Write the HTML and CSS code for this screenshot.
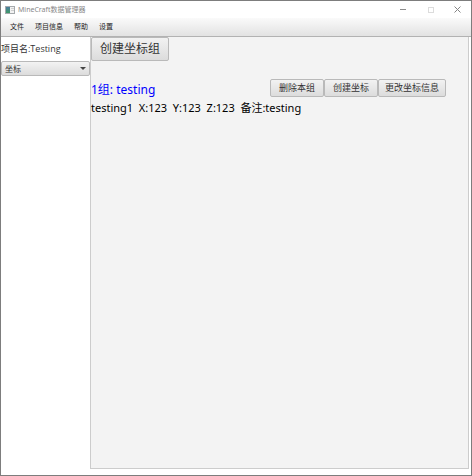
FILE: index.html
```html
<!DOCTYPE html>
<html lang="zh-CN">
<head>
<meta charset="utf-8">
<title>MineCraft数据管理器</title>
<link rel="stylesheet" href="styles.css">
</head>
<body>
<div class="window">
  <header class="titlebar">
    <svg class="app-icon" width="10" height="8" viewBox="0 0 10 8" aria-hidden="true">
      <defs><linearGradient id="g" x1="0" y1="0" x2="0" y2="1"><stop offset="0" stop-color="#4a7c9c"/><stop offset="1" stop-color="#3f9a68"/></linearGradient></defs>
      <rect x=".5" y=".5" width="9" height="7" fill="#f2f2f2" stroke="#a5a9ac"/>
      <rect x="1" y="1" width="4" height="6" fill="url(#g)"/>
      <path d="M6 2.5h3M6 4.5h3" stroke="#cfcfcf"/>
    </svg>
    <h1 class="title">MineCraft数据管理器</h1>
    <div class="controls">
      <button class="control" aria-label="最小化"><svg width="7" height="7" viewBox="0 0 7 7"><path d="M0 3.5h6" stroke="#8c8c8c"/></svg></button>
      <button class="control" aria-label="最大化" disabled><svg width="7" height="7" viewBox="0 0 7 7"><rect x="1.5" y="1.5" width="5" height="5" fill="none" stroke="#dcdcdc"/></svg></button>
      <button class="control" aria-label="关闭"><svg width="7" height="7" viewBox="0 0 7 7"><path d="M.5.5l6 6M6.500.5l-6 6" stroke="#858585"/></svg></button>
    </div>
  </header>
  <nav class="menubar">
    <button class="menu">文件</button>
    <button class="menu">项目信息</button>
    <button class="menu">帮助</button>
    <button class="menu">设置</button>
  </nav>
  <div class="body">
    <aside class="sidebar">
      <p class="project">项目名:Testing</p>
      <div class="combo">
        <select class="select" aria-label="类型"><option>坐标</option></select>
      </div>
    </aside>
    <main class="content">
      <button class="button button-large">创建坐标组</button>
      <section class="group">
        <div class="group-head">
          <h2 class="group-title">1组: testing</h2>
          <div class="actions">
            <button class="button">删除本组</button>
            <button class="button">创建坐标</button>
            <button class="button button-tight">更改坐标信息</button>
          </div>
        </div>
        <p class="point">testing1  X:123  Y:123  Z:123  备注:testing</p>
      </section>
    </main>
  </div>
</div>
</body>
</html>
```
FILE: styles.css
```css
* {
  box-sizing: border-box;
}

body {
  margin: 0;
  font-family: "Noto Sans", "Noto Sans CJK SC", sans-serif;
  color: #000;
  background: #fff;
}

h1, h2, p {
  margin: 0;
  font-weight: 400;
}

button, select {
  font-family: inherit;
  margin: 0;
}

.window {
  display: flex;
  flex-direction: column;
  min-height: 100vh;
  border: 1px solid #7d7d7d;
}

.titlebar {
  display: flex;
  align-items: center;
  height: 17px;
  padding-left: 4px;
}

.app-icon {
  flex: none;
}

.title {
  margin-left: 3px;
  font-size: 7px;
  line-height: 16px;
  color: #888;
  white-space: nowrap;
}

.controls {
  display: flex;
  margin-left: auto;
}

.control {
  display: flex;
  align-items: center;
  justify-content: center;
  width: 27px;
  height: 16px;
  padding: 0;
  border: 0;
  background: none;
}

.menubar {
  display: flex;
  align-items: center;
  gap: 1px;
  height: 19px;
  padding-left: 4px;
  background: linear-gradient(#fafafa, #e2e2e2);
  border-bottom: 1px solid #b2b2b2;
}

.menu {
  padding: 0 5px;
  border: 0;
  background: none;
  font-size: 7px;
  line-height: 16px;
  color: #222;
  white-space: nowrap;
}

.body {
  display: flex;
  flex: 1;
  padding: 0 2px 6px 0;
}

.sidebar {
  flex: none;
  width: 89px;
}

.project {
  font-family: "Open Sans", "Noto Sans CJK SC", sans-serif;
  font-size: 9px;
  line-height: 24px;
  color: #333;
  white-space: nowrap;
}

.combo {
  position: relative;
}

.combo::after {
  content: "";
  position: absolute;
  right: 4px;
  top: 6px;
  border: 3px solid transparent;
  border-top-color: #444;
  border-bottom: 0;
  pointer-events: none;
}

.select {
  display: block;
  appearance: none;
  width: 100%;
  height: 15px;
  padding: 0 3px;
  border: 1px solid #b9b9b9;
  border-radius: 2px;
  background: linear-gradient(#f3f3f3, #dcdcdc);
  font-size: 8px;
  line-height: 13px;
  color: #333;
}

.content {
  flex: 1;
  min-width: 0;
  background: #f3f3f3;
  border: 1px solid #ccc;
  border-top: 0;
}

.button {
  height: 18px;
  padding: 0 8px;
  border: 1px solid #b9b9b9;
  border-radius: 2px;
  background: linear-gradient(#f2f2f2, #dcdcdc);
  font-size: 9px;
  line-height: 16px;
  color: #333;
  white-space: nowrap;
}

.button-tight {
  padding: 0 6px;
}

.button-large {
  display: block;
  height: 24px;
  font-size: 12px;
  line-height: 22px;
}

.group {
  margin-top: 18px;
}

.group-head {
  display: flex;
  justify-content: space-between;
  padding-right: 22px;
}

.group-title {
  font-size: 12px;
  line-height: 22px;
  color: #00f;
}

.actions {
  display: flex;
}

.point {
  font-size: 11px;
  line-height: 14px;
  white-space: pre;
}
```
